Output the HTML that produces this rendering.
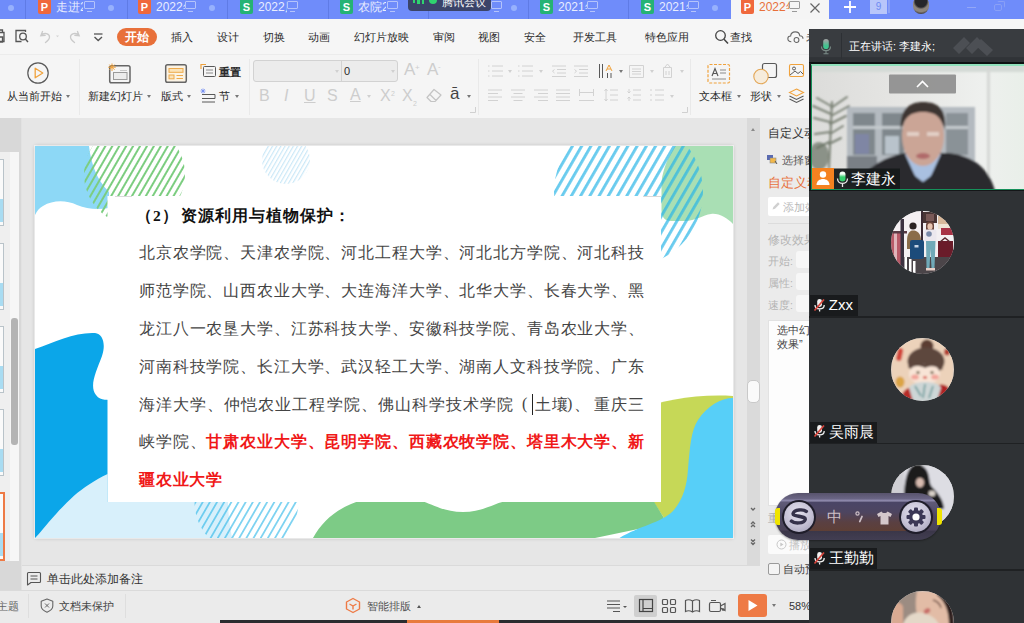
<!DOCTYPE html>
<html lang="zh">
<head>
<meta charset="utf-8">
<title>WPS</title>
<style>
*{box-sizing:border-box;margin:0;padding:0}
html,body{width:1024px;height:623px;overflow:hidden;background:#e6e6e6;font-family:"Liberation Sans",sans-serif;}
.abs{position:absolute}
#root{position:relative;width:1024px;height:623px;overflow:hidden;background:#e6e6e6}
/* tab bar */
#tabbar{left:0;top:0;width:1024px;height:19px;background:#6f8cfa}
.tab{position:absolute;top:0;height:19px;border-left:1px solid #5f7be6}
.tab .ic{position:absolute;top:0;width:13px;height:14px;border-radius:0 0 2px 2px;color:#fff;font-size:11px;font-weight:bold;line-height:14px;text-align:center}
.ic.p{background:#f0683c}
.ic.s{background:#25b374}
.tab .tx{position:absolute;top:-1px;font-size:12px;line-height:16px;color:#e8edff;white-space:nowrap;overflow:hidden}
.tab .dot{position:absolute;top:4.500px;width:6px;height:6px;border-radius:3px;background:#97b1fd}
.tab .mon{position:absolute;top:1px;width:11px;height:8px;border:1px solid #b4c3fb;border-radius:1px}
.tab .mon:after{content:"";position:absolute;left:2px;top:9px;width:5px;height:1px;background:#b4c3fb}
/* menu bar */
#menubar{left:0;top:19px;width:1024px;height:35px;background:#f6f6f6}
.mi{position:absolute;top:10px;font-size:11px;line-height:16px;color:#2b2b2b;white-space:nowrap}
/* ribbon */
#ribbon{left:0;top:54px;width:1024px;height:64px;background:#f5f5f5;border-top:1px solid #ececec}
.rt{position:absolute;font-size:11px;line-height:14px;color:#2b2b2b;white-space:nowrap}
.vsep{position:absolute;top:4px;width:1px;height:56px;background:#e9e9e9}

.dd{position:absolute;width:0;height:0;border-left:2.5px solid transparent;border-right:2.5px solid transparent;border-top:3px solid #777}
.dd.g{border-top-color:#d0d0d0}
.gi{position:absolute;color:#cdcdcd;line-height:18px;white-space:nowrap}

.sl{font-family:"Liberation Serif",serif;font-size:16px;line-height:24px;color:#444;white-space:nowrap}
.jl{left:104px;width:505px;text-align:justify;text-align-last:justify;white-space:nowrap}
.sl b{color:#f01818;font-weight:bold}

.tsep{position:absolute;left:0;width:215px;height:1.500px;background:#1f2123}
.av{position:absolute;left:82px;width:63px;height:63px;border-radius:50%;overflow:hidden;background:#ccc}
.nl{position:absolute;left:1.300px;height:21px;background:#191b1d;color:#fff;font-size:15px;line-height:20px;padding-left:18.500px;white-space:nowrap;overflow:hidden}
.nl .mu{position:absolute;left:3px;top:2.500px}

.th{position:absolute;left:0;width:4px;height:67px;border:1px solid #b9c3c9;border-left:none;background:linear-gradient(#fafafa 0 60%,#a9dcf2 60% 96%,#fafafa 96%)}
.rp{white-space:nowrap;line-height:16px}
.tab .mon.mg:after{background:#9a9a9a}
</style>
</head>
<body>
<div id="root">

<!-- ============ TAB BAR ============ -->
<div id="tabbar" class="abs">
  <div class="tab" style="left:-1px;width:26px"><span class="dot" style="left:8px"></span></div>
  <div class="tab" style="left:25px;width:102px"><span class="ic p" style="left:12px">P</span><span class="tx" style="left:30px;width:27px">走进2</span><span class="mon" style="left:58px"></span><span class="dot" style="left:82px"></span></div>
  <div class="tab" style="left:127px;width:100px"><span class="ic p" style="left:10px">P</span><span class="tx" style="left:28px;width:29px">2022年</span><span class="mon" style="left:57px"></span><span class="dot" style="left:81px"></span></div>
  <div class="tab" style="left:227px;width:101px"><span class="ic s" style="left:12px">S</span><span class="tx" style="left:30px;width:29px">2022届</span><span class="mon" style="left:59px"></span></div>
  <div class="tab" style="left:328px;width:100px"><span class="ic s" style="left:11px">S</span><span class="tx" style="left:29px;width:28px">农院2</span><span class="mon" style="left:58px"></span></div>
  <div class="tab" style="left:428px;width:100px"><span class="mon" style="left:62px"></span><span class="dot" style="left:82px"></span></div>
  <div class="tab" style="left:528px;width:100px"><span class="ic s" style="left:11px">S</span><span class="tx" style="left:29px;width:29px">2021年</span><span class="mon" style="left:58px"></span></div>
  <div class="tab" style="left:628px;width:103px"><span class="ic s" style="left:12px">S</span><span class="tx" style="left:30px;width:29px">2021年</span><span class="mon" style="left:59px"></span><span class="dot" style="left:83px"></span></div>
  <div class="tab" style="left:731px;width:98px;background:#f5f5f5;border-left:none"><span class="ic p" style="left:10px">P</span><span class="tx" style="left:28px;width:30px;color:#e8703a">2022年</span><span class="mon mg" style="left:58px;border-color:#9a9a9a"></span>
    <svg class="abs" style="left:78px;top:2px" width="12" height="12" viewBox="0 0 12 12"><path d="M1.5 1.5L10.5 10.5M10.5 1.5L1.5 10.5" stroke="#666" stroke-width="1.2" fill="none"/></svg></div>
  <!-- plus -->
  <svg class="abs" style="left:843px;top:0" width="14" height="14" viewBox="0 0 14 14"><path d="M7 1V13M1 7H13" stroke="#fff" stroke-width="1.8"/></svg>
  <div class="abs" style="left:870px;top:0;width:17px;height:14px;background:#b8c6fa;color:#6f8af2;font-size:10px;line-height:13px;text-align:center">9</div>
  <div class="abs" style="left:888px;top:0;width:2px;height:13px;background:#8aa0f6"></div>
  <div class="abs" style="left:913px;top:-4px;width:16px;height:18px;border-radius:8px;background:radial-gradient(circle at 50% 30%,#26262a 0 38%,#8d857c 52% 68%,#4a4644 82%)"></div>
  <div class="abs" style="left:967px;top:7px;width:9px;height:1px;background:#93a7f7"></div>
  <div class="abs" style="left:994px;top:4px;width:8px;height:7px;border:1px solid #8aa0f6;border-radius:2px"></div>
  <div class="abs" style="left:997px;top:1px;width:8px;height:7px;border:1px solid #8aa0f6;border-radius:2px;border-left-color:transparent;border-bottom-color:transparent"></div>
  <div class="abs" style="left:408px;top:-6px;width:83px;height:17px;border-radius:4px;background:#394163;opacity:.96"></div>
  <div class="abs" style="left:413px;top:0;width:2px;height:3px;background:#2fd36f"></div><div class="abs" style="left:417px;top:0;width:2.500px;height:4px;background:#2fd36f"></div><div class="abs" style="left:421.500px;top:0;width:2.500px;height:4px;background:#2fd36f"></div>
  <div class="abs" style="left:429px;top:-4px;width:8px;height:8px;border-radius:4px;background:#2fd36f"></div>
  <div class="abs" style="left:442px;top:-5px;font-size:11px;line-height:14px;color:#fff;white-space:nowrap">腾讯会议</div>
</div>

<!-- ============ MENU BAR ============ -->
<div id="menubar" class="abs">
  <svg class="abs" style="left:0;top:10px" width="110" height="16" viewBox="0 0 110 16" fill="none">
    <path d="M-3 3.500H4V12.500H-3M-2 1H2.500V3.500M-2 8H2.500V13H-2" stroke="#555" stroke-width="1.300"/>
    <path d="M21.500 12.500H16V1.500H25.500V3" stroke="#555" stroke-width="1.300"/><circle cx="23" cy="7.500" r="3.300" stroke="#555" stroke-width="1.300"/><path d="M25.300 10L28 13" stroke="#555" stroke-width="1.400"/>
    <path d="M42.500 2.500L40.800 6.800L45.200 6.300M41.200 6.500C44 3 49.500 4.500 49.500 8C49.500 10.500 47.500 12 45.500 13.500" stroke="#cacaca" stroke-width="1.300" stroke-linecap="round"/>
    <path d="M56 6.500H59L57.500 8.300Z" fill="#d4d4d4"/>
    <path d="M77.500 2.500L79.200 6.800L74.800 6.300M78.800 6.500C76 3 70.500 4.500 70.500 8C70.500 10.500 72.500 12 74.500 13.500" stroke="#cacaca" stroke-width="1.300" stroke-linecap="round"/>
    <path d="M94 5H102.500" stroke="#555" stroke-width="1.300"/><path d="M94.500 8L98.200 11.500L102 8" stroke="#555" stroke-width="1.400"/>
  </svg>
  <svg class="abs" style="left:714px;top:10px" width="15" height="16" viewBox="0 0 15 16" fill="none"><circle cx="6.500" cy="6.500" r="4.800" stroke="#444" stroke-width="1.300"/><path d="M10 10.200L14 14.500" stroke="#444" stroke-width="1.500"/></svg>
  <svg class="abs" style="left:787px;top:11px" width="19" height="14" viewBox="0 0 22 16" fill="none"><path d="M5 13.500C2.500 13.500 1 12 1 10C1 8 2.500 6.800 4.200 6.800C4.500 3.800 7 2 9.500 2C12.300 2 14.500 3.800 14.800 6.500C17 6.500 18.500 8 18.500 10" stroke="#666" stroke-width="1.300"/><circle cx="11" cy="11.500" r="2.800" stroke="#666" stroke-width="1.200"/></svg>
  <div class="abs" style="left:116.500px;top:8.500px;width:40px;height:18.500px;border-radius:9.500px;background:#e8703a;color:#fff;font-size:12px;font-weight:bold;line-height:18.500px;text-align:center">开始</div>
  <span class="mi" style="left:171px">插入</span>
  <span class="mi" style="left:217px">设计</span>
  <span class="mi" style="left:263px">切换</span>
  <span class="mi" style="left:308px">动画</span>
  <span class="mi" style="left:354px">幻灯片放映</span>
  <span class="mi" style="left:433px">审阅</span>
  <span class="mi" style="left:478px">视图</span>
  <span class="mi" style="left:524px">安全</span>
  <span class="mi" style="left:573px">开发工具</span>
  <span class="mi" style="left:645px">特色应用</span>
  <span class="mi" style="left:730px">查找</span>
  <span class="mi" style="left:806px;color:#555">未</span>
</div>

<!-- ============ RIBBON ============ -->
<div id="ribbon" class="abs">
  <!-- play from current -->
  <svg class="abs" style="left:26px;top:6px" width="24" height="24" viewBox="0 0 24 24"><circle cx="12" cy="12" r="10.2" fill="none" stroke="#595959" stroke-width="1.2"/><path d="M9.2 7.2L16.8 12L9.2 16.8Z" fill="none" stroke="#f0a23c" stroke-width="1.3" stroke-linejoin="round"/></svg>
  <span class="rt" style="left:7px;top:34px">从当前开始</span><span class="dd" style="left:66px;top:40px"></span>
  <div class="vsep" style="left:79px"></div>
  <!-- new slide -->
  <svg class="abs" style="left:105px;top:7px" width="28" height="24" viewBox="0 0 28 24"><rect x="4.700" y="3.700" width="20.300" height="17" rx="1.800" fill="#f5f5f5" stroke="#666" stroke-width="1.500"/><rect x="8.500" y="10.500" width="13.500" height="7" fill="#ececec" stroke="#9a9a9a" stroke-width="1"/><path d="M15 8.500H22" stroke="#c8c8c8" stroke-width="1"/><path d="M7 1.500V9M3.200 5.200H10.800M4.400 2.600L9.600 7.800M9.600 2.600L4.400 7.800" stroke="#f0a23c" stroke-width="1"/></svg>
  <span class="rt" style="left:88px;top:34px">新建幻灯片</span><span class="dd" style="left:147px;top:40px"></span>
  <!-- layout -->
  <svg class="abs" style="left:164px;top:8px" width="24" height="22" viewBox="0 0 24 22"><rect x="1.700" y="1.700" width="20.600" height="17.600" rx="1.800" fill="#fbf3e4" stroke="#666" stroke-width="1.500"/><rect x="5" y="5.500" width="14" height="3.800" fill="#fbe3b8" stroke="#eeaa4c" stroke-width="1"/><rect x="5" y="12" width="5" height="3.800" fill="#fbe3b8" stroke="#eeaa4c" stroke-width="1"/><path d="M12.500 12.500H19M12.500 15.500H19" stroke="#eeaa4c" stroke-width="1.100"/></svg>
  <span class="rt" style="left:161px;top:34px">版式</span><span class="dd" style="left:187px;top:40px"></span>
  <!-- reset -->
  <svg class="abs" style="left:200px;top:8px" width="17" height="16" viewBox="0 0 17 16"><rect x="3.5" y="3.5" width="12" height="10" rx="1" fill="none" stroke="#595959" stroke-width="1"/><path d="M6 7H13M6 10H13" stroke="#8a8a8a" stroke-width="1"/><path d="M1 6V1.5H6" fill="none" stroke="#f0a23c" stroke-width="1.2"/></svg>
  <span class="rt" style="left:219px;top:10px;font-weight:bold;font-size:11px">重置</span>
  <!-- section -->
  <svg class="abs" style="left:200px;top:33px" width="17" height="16" viewBox="0 0 17 16"><path d="M2 6.5H15V10.5H2M2 14H15" fill="none" stroke="#595959" stroke-width="1"/><path d="M3 0.5V5.5M0.5 3H5.5M1.2 1.2L4.8 4.8M4.8 1.2L1.2 4.8" stroke="#6f8af2" stroke-width="0.8"/></svg>
  <span class="rt" style="left:219px;top:34px">节</span><span class="dd" style="left:235px;top:40px"></span>
  <div class="vsep" style="left:249px"></div>
  <!-- font boxes -->
  <div class="abs" style="left:253px;top:5px;width:145px;height:22px;background:#ececec;border:1px solid #d2d2d2;border-radius:3px"></div>
  <div class="abs" style="left:341px;top:6px;width:1px;height:20px;background:#d2d2d2"></div>
  <span class="rt" style="left:344px;top:9px;font-size:11px">0</span>
  <span class="dd g" style="left:335px;top:15px"></span><span class="dd g" style="left:391px;top:15px"></span>
  <span class="gi" style="left:404px;top:6px;font-size:17px">A</span><span class="gi" style="left:415px;top:4px;font-size:8px">+</span>
  <span class="gi" style="left:427px;top:6px;font-size:17px">A</span><span class="gi" style="left:438px;top:3px;font-size:8px">-</span>
  <span class="gi" style="left:259px;top:32px;font-size:16px">B</span>
  <span class="gi" style="left:284px;top:32px;font-size:16px;font-style:italic">I</span>
  <span class="gi" style="left:304px;top:32px;font-size:16px;text-decoration:underline">U</span>
  <span class="gi" style="left:327px;top:32px;font-size:16px">S</span>
  <span class="gi" style="left:350px;top:31px;font-size:16px;text-decoration:underline">A</span><span class="dd g" style="left:367px;top:40px"></span>
  <span class="gi" style="left:380px;top:32px;font-size:16px">X</span><span class="gi" style="left:391px;top:30px;font-size:7px">2</span>
  <span class="gi" style="left:402px;top:32px;font-size:16px">X</span><span class="gi" style="left:413px;top:40px;font-size:7px">2</span>
  <svg class="abs" style="left:425px;top:33px" width="18" height="16" viewBox="0 0 18 16"><path d="M9 1.5L16 7L10 13.5H6L2 9.5Z M5 6.5L11 12.5" fill="none" stroke="#c4c4c4" stroke-width="1.2" stroke-linejoin="round"/></svg>
  <span class="rt" style="left:450px;top:32px;font-size:17px;color:#444">ā</span><span class="dd" style="left:467px;top:40px"></span>
  <div class="vsep" style="left:478px"></div>
  <!-- paragraph row1 -->
  <svg class="abs" style="left:486px;top:7px" width="200" height="20" viewBox="0 0 200 20" fill="none" stroke="#d2d2d2" stroke-width="1">
    <path d="M2 4H3.5M6 4H17M2 9H3.5M6 9H17M2 14H3.5M6 14H17"/>
    <path d="M32 4H33.5M36 4H47M32 9H33.5M36 9H47M32 14H33.5M36 14H47"/>
    <path d="M66 4H80M71 7.5H80M71 11H80M66 14.5H80M68.5 7.5L66.5 9.2L68.5 11"/>
    <path d="M88 4H102M93 7.5H102M93 11H102M88 14.5H102M88.5 7.5L90.5 9.2L88.5 11"/>
    <path d="M113.5 2V16M116.5 2V16" stroke="#595959"/><path d="M120 9L123 3L126 9M121 7H125" stroke="#f0a23c"/><path d="M121.5 11V16M125 11V16" stroke="#595959"/>
    <path d="M143.500 3.500H157.500V15.500H143.500ZM146 7H155M146 9.500H155M146 12H155"/>
    <path d="M177.500 5.500H185.500V15.500H177.500ZM179 5L181.500 2L184 5M180 9V13M183 9V13"/>
  </svg>
  <span class="dd g" style="left:508px;top:15px"></span><span class="dd g" style="left:539px;top:15px"></span><span class="dd" style="left:619px;top:15px"></span><span class="dd g" style="left:650px;top:15px"></span><span class="dd g" style="left:680px;top:15px"></span>
  <!-- paragraph row2 -->
  <svg class="abs" style="left:486px;top:32px" width="200" height="20" viewBox="0 0 200 20" fill="none" stroke="#d2d2d2" stroke-width="1">
    <path d="M2 3H16M2 6.500H12M2 10H16M2 13.500H12"/>
    <path d="M25 3H39M27.500 6.500H36.500M25 10H39M27.500 13.500H36.500"/>
    <path d="M48 3H62M52 6.500H62M48 10H62M52 13.500H62"/>
    <path d="M70 3H84M70 6.500H84M70 10H84M70 13.500H84"/>
    <path d="M93.500 2V9M107.500 2V9M94 5.500H107M93 13.500H108"/>
    <path d="M124 3H132M124 8H132M124 13H132M120 2V14M118.500 4L120 2L121.500 4M118.500 12L120 14L121.500 12"/>
    <path d="M147 3H155M147 8H155M147 13H155M143 2V6M143 10V14M141.500 4.500L143 6L144.500 4.500M141.500 11.500L143 10L144.500 11.500"/>
    <path d="M164 3H166M169 3H178M164 8H166M169 8H178M164 13H166M169 13H178"/>
  </svg>
  <span class="dd g" style="left:670px;top:40px"></span>
  <svg class="abs" style="left:682px;top:52px" width="6" height="6" viewBox="0 0 6 6"><path d="M5.500 0V5.500H0" fill="none" stroke="#d0d0d0"/></svg>
  <svg class="abs" style="left:470px;top:52px" width="6" height="6" viewBox="0 0 6 6"><path d="M5.500 0V5.500H0" fill="none" stroke="#d0d0d0"/></svg>
  <div class="vsep" style="left:690px"></div>
  <!-- text box -->
  <svg class="abs" style="left:706px;top:7px" width="26" height="24" viewBox="0 0 26 24"><rect x="2" y="2.500" width="21.500" height="18.500" rx="1.500" fill="none" stroke="#f0a23c" stroke-width="1.200" stroke-dasharray="3 1.500"/><path d="M6 14L9 6.500L12 14M7 11.500H11" fill="none" stroke="#595959" stroke-width="1.200"/><path d="M14 8H20M14 11H20M6 17H20" stroke="#8a8a8a" stroke-width="1"/></svg>
  <span class="rt" style="left:699px;top:34px">文本框</span><span class="dd" style="left:737px;top:40px"></span>
  <!-- shapes -->
  <svg class="abs" style="left:752px;top:7px" width="26" height="24" viewBox="0 0 26 24"><rect x="10.500" y="1.500" width="14" height="14" rx="2" fill="#f5f5f5" stroke="#595959" stroke-width="1.200"/><circle cx="9" cy="14.500" r="7.200" fill="#f6ecdc" stroke="#e3a655" stroke-width="1.100"/></svg>
  <span class="rt" style="left:750px;top:34px">形状</span><span class="dd" style="left:777px;top:40px"></span>
  <!-- picture / layers -->
  <svg class="abs" style="left:788px;top:8px" width="17" height="15" viewBox="0 0 17 15"><rect x="1.500" y="1.500" width="14" height="12" rx="1.500" fill="none" stroke="#f0a23c" stroke-width="1.100"/><circle cx="6" cy="5.500" r="1.500" fill="none" stroke="#595959"/><path d="M2 12L7 8L10 10.500L12.500 8.500L15 11" fill="none" stroke="#595959" stroke-width="1"/></svg>
  <svg class="abs" style="left:788px;top:33px" width="17" height="16" viewBox="0 0 17 16"><path d="M8.500 1L15.500 4.500L8.500 8L1.500 4.500Z" fill="none" stroke="#f0a23c" stroke-width="1.100"/><path d="M1.500 8L8.500 11.500L15.500 8M1.500 11L8.500 14.500L15.500 11" fill="none" stroke="#595959" stroke-width="1.100"/></svg>
</div>

<!-- WORKSPACE -->
<div id="work" class="abs" style="left:0;top:118px;width:1024px;height:505px;background:#e6e6e6"></div>

<!-- SLIDE -->
<div id="slide" class="abs" style="left:35px;top:146px;width:698px;height:392px;background:#fff;box-shadow:0 0 0 1px rgba(255,255,255,.5),0 0 4px rgba(0,0,0,.22);overflow:hidden">
<svg class="abs" style="left:0;top:0" width="698" height="392" viewBox="0 0 698 392">
  <defs>
    <pattern id="hg" width="6" height="6" patternUnits="userSpaceOnUse" patternTransform="rotate(30)"><rect x="0" y="0" width="2" height="6" fill="#7ccd80"/></pattern>
    <pattern id="hb" width="8" height="8" patternUnits="userSpaceOnUse" patternTransform="rotate(30)"><rect x="0" y="0" width="2.900" height="8" fill="#29b6e8" fill-opacity="0.700"/></pattern>
    <pattern id="hb2" width="6.200" height="6.200" patternUnits="userSpaceOnUse" patternTransform="rotate(30)"><rect x="0" y="0" width="1.800" height="6.200" fill="#29b6e8" fill-opacity="0.600"/></pattern>
    <pattern id="hl" width="3.6" height="3.6" patternUnits="userSpaceOnUse" patternTransform="rotate(30)"><rect x="0" y="0" width="1.2" height="3.6" fill="#cbe8f7"/></pattern>
  </defs>
  <!-- top-left light blue blob -->
  <path d="M0 0H54C56 18 62 34 74 46V62C62 64 52 63 42 59C31 54 18 54 8 60C4 62 2 65 0 69Z" fill="#8dd8f6"/>
  <!-- top-left green hatch -->
  <circle cx="99.500" cy="28.500" r="50.500" fill="url(#hg)"/>
  <!-- small faint hatch -->
  <circle cx="251" cy="14" r="24" fill="url(#hl)"/>
  <!-- top-right light green -->
  <path d="M640 0H698V78C692 72 684 67 676 68C668 69 660 75 650 75H636C630 75 626.500 71 626.500 65V36C628 22 634 10 640 0Z" fill="#a9dfb4"/>
  <!-- top-right blue hatch -->
  <circle cx="593.500" cy="46" r="74.500" fill="url(#hb)"/>
  <!-- bottom pale blue -->
  
  <!-- bottom-left bright blue -->
  <path d="M0 203C20 196 40 186 60 187C68 188 71 198 67 210C61 226 54 240 61 249C66 256 73 252 80 256V392H0Z" fill="#0ba6e9"/>
  <path d="M72.600 328C60 334 48 342 39 349.700C30 358 22 366 3.800 388L0 392H197C195 380 193 368 193 356H72.600Z" fill="#d8f0fb"/>
  <!-- bottom hatch circle -->
  <circle cx="211.500" cy="356" r="52" fill="url(#hb2)"/>
  <!-- yellow-green -->
  <path d="M600 264C630 254 660 248 698 250V392H642L616 352Z" fill="#c6d857"/>
  <!-- green bottom -->
  <path d="M278 392C292 366 320 350 360 350C390 350 400 366 428 366C452 366 462 354 480 354H618L632 377L560 392Z" fill="#7dcb86"/>
  <!-- cyan right -->
  <path d="M698 252C686 252 672 260 663 274C656 285 655 300 653 323C652 340 648 354 638 365C626 377 604 380 584.500 392H698Z" fill="#57cff8"/>
  <!-- text box -->
  <rect x="72.500" y="50" width="553.500" height="306" fill="#fff"/>
  <path d="M80 50.500H97" stroke="#d9d9d9" stroke-width="1"/>
  <path d="M608 50.500H626" stroke="#d9d9d9" stroke-width="1"/>
</svg>
<div class="abs sl" style="left:101px;top:58px;font-weight:bold;font-size:15.500px;letter-spacing:0.900px;color:#111">（2）<span style="margin-left:3px">资源利用与植物保护：</span></div>
<div class="abs sl jl" style="top:95px">北京农学院、天津农学院、河北工程大学、河北北方学院、河北科技</div>
<div class="abs sl jl" style="top:133px">师范学院、山西农业大学、大连海洋大学、北华大学、长春大学、黑</div>
<div class="abs sl jl" style="top:171px">龙江八一农垦大学、江苏科技大学、安徽科技学院、青岛农业大学、</div>
<div class="abs sl jl" style="top:209px">河南科技学院、长江大学、武汉轻工大学、湖南人文科技学院、广东</div>
<div class="abs sl jl" style="top:247px;width:374px">海洋大学、仲恺农业工程学院、佛山科学技术学院</div>
<div class="abs sl" style="left:487px;top:246px">(</div>
<div class="abs sl jl" style="left:500px;top:247px;width:32.500px">土壤</div>
<div class="abs sl" style="left:532px;top:246px">)</div>
<div class="abs sl" style="left:539px;top:247px">、</div>
<div class="abs sl jl" style="left:559px;top:247px;width:49.500px">重庆三</div>
<div class="abs sl jl" style="top:284px">峡学院、<b>甘肃农业大学、昆明学院、西藏农牧学院、塔里木大学、新</b></div>
<div class="abs sl" style="left:104px;top:322px;letter-spacing:0.800px"><b>疆农业大学</b></div>
<div class="abs" style="left:497px;top:248px;width:1px;height:21px;background:#222"></div>
</div>


<!-- LEFT THUMB PANEL -->
<div class="abs" style="left:0;top:118px;width:22px;height:472px;background:#d8d8d8;border-right:1px solid #e2e2e2"></div>
<div class="abs" style="left:0;top:152px;width:19px;height:409px;background:#efefef"></div>
<div class="abs" style="left:10px;top:152px;width:9px;height:409px;background:#f6f6f6"></div>
<div class="abs" style="left:11px;top:318px;width:7px;height:127px;background:#b4b4b4;border-radius:3px"></div>
<div class="th" style="top:159px"></div><div class="th" style="top:243px"></div><div class="th" style="top:326px"></div><div class="th" style="top:409px"></div>
<div class="th" style="top:492px;height:69px;border-color:#ee7a45;border-width:2px;width:5px"></div>

<!-- SCROLLBAR + RIGHT WPS PANEL -->
<div class="abs" style="left:747px;top:118px;width:13px;height:448px;background:#dadada"></div>
<div class="abs" style="left:747px;top:380px;width:13px;height:23px;background:#fafafa;border:1px solid #c9c9c9;border-radius:5px"></div>
<span class="dd" style="left:750.500px;top:128px;transform:rotate(180deg);border-top-color:#8a8a8a"></span>
<svg class="abs" style="left:748.500px;top:506px" width="8" height="40" viewBox="0 0 8 40" fill="none" stroke="#666" stroke-width="1.300"><path d="M2 2L4 4L6 2"/><path d="M2 18L4 16L6 18M2 21L4 19L6 21"/><path d="M2 33.500L4 35.500L6 33.500M2 36.500L4 38.500L6 36.500"/></svg>
<div class="abs" style="left:760px;top:118px;width:50px;height:472px;background:#ebebeb"></div>
<div class="abs rp" style="left:768px;top:125px;color:#333;font-size:11.500px">自定义动画</div>
<svg class="abs" style="left:766px;top:154px" width="12" height="11" viewBox="0 0 12 11"><rect x="1" y="1" width="6" height="5" fill="#5a6ab0"/><rect x="4" y="4" width="6" height="5" fill="#f2b84a" stroke="#8a8a8a" stroke-width="0.600"/><path d="M9 7L11 10" stroke="#555" stroke-width="1"/></svg>
<div class="abs rp" style="left:782px;top:152px;color:#555;font-size:11px">选择窗格</div>
<div class="abs rp" style="left:768px;top:175px;color:#e8703a;font-size:13px">自定义动画</div>
<div class="abs" style="left:768px;top:197px;width:50px;height:19px;background:#fff;border-radius:2px"></div>
<svg class="abs" style="left:771px;top:201px" width="10" height="10" viewBox="0 0 10 10"><path d="M1.500 8.500L2.300 6L7 1.300L8.700 3L4 7.700Z" fill="#d0d0d0"/></svg>
<div class="abs rp" style="left:783px;top:199px;color:#b8b8b8;font-size:11px">添加效果</div>
<div class="abs" style="left:768px;top:223px;width:42px;height:1px;background:#dcdcdc"></div>
<div class="abs rp" style="left:768px;top:232px;color:#b5b5b5;font-size:12px">修改效果</div>
<div class="abs rp" style="left:768px;top:253px;color:#b5b5b5;font-size:10.500px">开始:</div>
<div class="abs rp" style="left:768px;top:275px;color:#b5b5b5;font-size:10.500px">属性:</div>
<div class="abs rp" style="left:768px;top:297px;color:#b5b5b5;font-size:10.500px">速度:</div>
<div class="abs" style="left:796px;top:251px;width:20px;height:17px;background:#f7f7f7;border-radius:3px"></div>
<div class="abs" style="left:796px;top:273px;width:20px;height:17px;background:#f7f7f7;border-radius:3px"></div>
<div class="abs" style="left:796px;top:295px;width:20px;height:17px;background:#f7f7f7;border-radius:3px"></div>
<div class="abs" style="left:768px;top:320px;width:50px;height:186px;background:#fdfdfd;border:1px solid #e2e2e2"></div>
<div class="abs rp" style="left:777px;top:323px;color:#444;font-size:11px;line-height:14px">选中幻<br>效果”</div>
<div class="abs rp" style="left:768px;top:510px;color:#aaa;font-size:10.500px">重</div>
<div class="abs" style="left:768px;top:535px;width:50px;height:19px;background:#fbfbfb;border-radius:2px"></div>
<svg class="abs" style="left:776px;top:539px" width="11" height="11" viewBox="0 0 11 11"><circle cx="5.500" cy="5.500" r="4.500" fill="none" stroke="#c8c8c8"/><path d="M4.300 3.500L7.500 5.500L4.300 7.500Z" fill="#c8c8c8"/></svg>
<div class="abs rp" style="left:789px;top:537px;color:#c4c4c4;font-size:10.500px">播放</div>
<div class="abs" style="left:768px;top:563px;width:12px;height:12px;border:1px solid #9a9a9a;border-radius:2px;background:#f4f4f4"></div>
<div class="abs rp" style="left:783px;top:561px;color:#444;font-size:11px">自动预览</div>

<!-- NOTES BAR -->
<div class="abs" style="left:22px;top:565px;width:738px;height:25px;background:#ebebeb;border-top:1px solid #dadada"></div>
<svg class="abs" style="left:26px;top:571px" width="16" height="15" viewBox="0 0 16 15"><path d="M2.500 1.500H13.500Q14.500 1.500 14.500 2.500V10.500Q14.500 11.500 13.500 11.500H5L1.500 14V2.500Q1.500 1.500 2.500 1.500Z" fill="none" stroke="#555" stroke-width="1.100" stroke-linejoin="round"/><path d="M4.500 5H11.500M4.500 8H11.500" stroke="#555" stroke-width="1.100"/></svg>
<div class="abs rp" style="left:47px;top:571px;color:#333;font-size:12px">单击此处添加备注</div>

<!-- STATUS BAR -->
<div class="abs" style="left:0;top:590px;width:810px;height:33px;background:#ebebeb;border-top:1px solid #dadada"></div>
<div class="abs rp" style="left:-3px;top:598px;color:#666;font-size:11px">主题</div>
<div class="abs" style="left:28px;top:594px;width:1px;height:24px;background:#dedede"></div>
<svg class="abs" style="left:40px;top:598px" width="14" height="15" viewBox="0 0 14 15"><path d="M7 1L12.800 3.200V8C12.800 11 10 13 7 14.200C4 13 1.200 11 1.200 8V3.200Z" fill="none" stroke="#666" stroke-width="1.100" stroke-linejoin="round"/><path d="M5 5.500L9 9.500M9 5.500L5 9.500" stroke="#666" stroke-width="1"/></svg>
<div class="abs rp" style="left:59px;top:598px;color:#444;font-size:11px">文档未保护</div>
<div class="abs" style="left:125px;top:594px;width:1px;height:24px;background:#dedede"></div>
<svg class="abs" style="left:345px;top:597px" width="16" height="17" viewBox="0 0 16 17"><path d="M8 1.500L14.500 5V12L8 15.500L1.500 12V5Z" fill="none" stroke="#ee7a45" stroke-width="1.400" stroke-linejoin="round"/><path d="M4.500 7L8 9L11.500 7M8 9V12.500" fill="none" stroke="#ee7a45" stroke-width="1.400"/></svg>
<div class="abs rp" style="left:367px;top:598px;color:#555;font-size:11px">智能排版</div>
<span class="dd" style="left:417px;top:605px;transform:rotate(180deg);border-top-color:#555"></span>
<svg class="abs" style="left:606px;top:598px" width="22" height="15" viewBox="0 0 22 15"><path d="M1 3H14M1 6.500H14M1 10H14M7 13.500H14" stroke="#555" stroke-width="1.200"/><path d="M17 8L19 10L21 8Z" fill="#555"/></svg>
<div class="abs" style="left:634px;top:595px;width:23px;height:22px;background:#cfcfcf;border-radius:2px"></div>
<svg class="abs" style="left:638px;top:598px" width="16" height="16" viewBox="0 0 16 16"><rect x="1.500" y="1.500" width="13" height="12" fill="none" stroke="#444" stroke-width="1.200"/><path d="M5 1.500V13.500M5 10.500H14.500" stroke="#444" stroke-width="1.200"/></svg>
<svg class="abs" style="left:661px;top:598px" width="16" height="16" viewBox="0 0 16 16" fill="none" stroke="#555" stroke-width="1.200"><rect x="1.500" y="1.500" width="5" height="5" rx="1"/><rect x="9.500" y="1.500" width="5" height="5" rx="1"/><rect x="1.500" y="9.500" width="5" height="5" rx="1"/><rect x="9.500" y="9.500" width="5" height="5" rx="1"/></svg>
<svg class="abs" style="left:684px;top:598px" width="17" height="16" viewBox="0 0 17 16" fill="none" stroke="#555" stroke-width="1.200"><path d="M8.500 3C6 1.500 3.500 1.500 1.500 2.500V13.500C3.500 12.500 6 12.500 8.500 14C11 12.500 13.500 12.500 15.500 13.500V2.500C13.500 1.500 11 1.500 8.500 3ZM8.500 3V14"/></svg>
<svg class="abs" style="left:708px;top:598px" width="19" height="16" viewBox="0 0 19 16" fill="none" stroke="#555" stroke-width="1.200"><rect x="1.500" y="4.500" width="11" height="9" rx="1.500"/><path d="M12.500 8L17 5.500V12.500L12.500 10M3 2.500H8"/><circle cx="15" cy="11.500" r="1.300" fill="#555" stroke="none"/></svg>
<div class="abs" style="left:738px;top:594px;width:29px;height:23px;background:#ee7a45;border-radius:3px"></div>
<svg class="abs" style="left:746px;top:599px" width="13" height="13" viewBox="0 0 13 13"><path d="M2.500 1L11.500 6.500L2.500 12Z" fill="#fff"/></svg>
<span class="dd" style="left:772px;top:604px"></span>
<div class="abs rp" style="left:789px;top:598px;color:#333;font-size:11px">58%</div>
<div class="abs" style="left:220px;top:620px;width:590px;height:3px;background:#2a2c2f"></div>
<div class="abs" style="left:407px;top:620px;width:92px;height:3px;background:#e87a3c"></div>

<!-- TENCENT PANEL -->
<div id="tm" class="abs" style="left:809px;top:29px;width:215px;height:594px;background:#2f3235;overflow:hidden">
  <!-- header -->
  <div class="abs" style="left:0;top:0;width:215px;height:34px;background:linear-gradient(#393c40 0 82%,#303337 84% 100%)"></div>
  <div class="abs" style="left:0;top:33px;width:215px;height:1.500px;background:#0d1112"></div>
  <svg class="abs" style="left:11px;top:9px" width="12" height="18" viewBox="0 0 12 18"><defs><linearGradient id="mg" x1="0" y1="0" x2="0" y2="1"><stop offset="0.150" stop-color="#9aa3a1"/><stop offset="0.700" stop-color="#40c48e"/></linearGradient></defs><rect x="3.200" y="1" width="5.600" height="10" rx="2.800" fill="url(#mg)"/><path d="M1.500 8.500C1.500 14 10.500 14 10.500 8.500M6 12.800V15.500M3.500 15.800H8.500" fill="none" stroke="#7a8a86" stroke-width="1.100"/></svg>
  <div class="abs" style="left:32px;top:4px;width:1px;height:26px;background:#2d3034"></div>
  <div class="abs" style="left:40px;top:9px;font-size:10.800px;line-height:16px;color:#fff;white-space:nowrap">正在讲话: 李建永;</div>
  <svg class="abs" style="left:144px;top:8px" width="42" height="20" viewBox="0 0 42 20"><path d="M0 11L11 0L17 6L6 17ZM13 11L24 0L30 6L19 17ZM22 8L28 2L40 13L34 19Z" fill="#4c4f54"/></svg>
  <!-- video -->
  <div class="abs" style="left:0;top:34px;width:2px;height:128px;background:#1a1d1f"></div>
  <div class="abs" style="left:0;top:160.500px;width:215px;height:1.200px;background:#141618"></div>
  <div class="abs" style="left:2px;top:34.500px;width:216px;height:126px;border:1.500px solid #16905a;border-top:2px solid #8fe0bb;background:#e2e3e1;overflow:hidden">
    <svg class="abs" style="left:-2.700px;top:-2px" width="216" height="127" viewBox="0 0 216 127">
      <defs><filter id="bl" x="-10%" y="-10%" width="120%" height="120%"><feGaussianBlur stdDeviation="1.300"/></filter>
      <linearGradient id="wall" x1="0" y1="0" x2="1" y2="0"><stop offset="0" stop-color="#dcdcda"/><stop offset="0.450" stop-color="#e6e6e4"/><stop offset="0.800" stop-color="#eef0ee"/><stop offset="1" stop-color="#e9efe9"/></linearGradient></defs>
      <rect width="216" height="127" fill="url(#wall)"/>
      <g filter="url(#bl)">
        <rect x="0" y="0" width="216" height="8" fill="#d4dad6"/>
        <rect x="178" y="0" width="3" height="127" fill="#d6d8d6"/>
        <!-- cabinet -->
        <rect x="38" y="43" width="128" height="60" fill="#b4bac0"/>
        <rect x="44" y="49" width="22" height="42" fill="#7f878c"/>
        <rect x="73" y="49" width="22" height="42" fill="#7f878c"/>
        <rect x="137" y="49" width="22" height="42" fill="#8a9297"/>
        <rect x="44" y="62" width="115" height="3" fill="#c4cace"/>
        <rect x="46" y="70" width="14" height="20" fill="#7f86a4"/>
        <rect x="76" y="72" width="14" height="18" fill="#b9c3cb"/>
        <rect x="38" y="92" width="30" height="30" fill="#7a8086"/>
        <!-- plant -->
        <path d="M23 38L20 104M22 42L8 34M22 44L38 33M22 50L4 42M22 52L40 42M21 58L5 54M21 60L37 52M21 68L6 70M21 70L34 62M20 78L8 84M20 80L32 74" stroke="#7b8276" stroke-width="2" fill="none" stroke-linecap="round"/>
        <ellipse cx="10" cy="92" rx="10" ry="14" fill="#6a7264" opacity="0.700"/>
        <!-- body -->
        <path d="M46 127C52 106 74 93 96 89L140 89C164 92 180 104 186 127Z" fill="#2a2a2e"/>
        <path d="M96 90L106 112L114 118L122 112L132 90Z" fill="#a9c0e0"/>
        <path d="M100 104L114 122L128 104L132 116L114 127L98 116Z" fill="#2a2a2e"/>
        <!-- head -->
        <ellipse cx="114" cy="72" rx="21" ry="30" fill="#cba596"/>
        <path d="M92 66C90 46 100 38 114 38C130 38 138 46 136 66C132 54 128 48 114 48C100 48 96 54 92 66Z" fill="#3e3630"/>
        <path d="M98 70H110M118 70H130" stroke="#e2cfc6" stroke-width="4"/>
        <ellipse cx="114" cy="92" rx="7" ry="3" fill="#b06a6a"/>
      </g>
      <rect x="80" y="10.500" width="67" height="19" rx="1" fill="#8e8e8e" opacity="0.920"/>
      <path d="M108 23L113.500 17.500L119 23" fill="none" stroke="#fff" stroke-width="1.600"/>
      <!-- label -->
      <rect x="3" y="104" width="22" height="21" fill="#f58220"/>
      <circle cx="14" cy="110.500" r="3.200" fill="#fff"/><path d="M7.500 121C7.500 113 20.500 113 20.500 121Z" fill="#fff"/>
      <rect x="25" y="104.500" width="66" height="20.500" fill="#15191a" opacity="0.950"/>
      <defs><linearGradient id="mg2" x1="0" y1="0" x2="0" y2="1"><stop offset="0.250" stop-color="#f4fff6"/><stop offset="0.550" stop-color="#35d06e"/></linearGradient></defs><rect x="30.500" y="107.500" width="6" height="10" rx="3" fill="url(#mg2)"/><path d="M28.500 114.500C28.500 121 38.500 121 38.500 114.500" fill="none" stroke="#e8e8e8" stroke-width="1.300"/><path d="M33.500 120V123" stroke="#e8e8e8" stroke-width="1.300"/>
    </svg>
    <div class="abs" style="left:39px;top:103px;font-size:15px;line-height:20px;color:#fff;white-space:nowrap">李建永</div>
  </div>
  <!-- tiles -->
  <div class="tsep" style="top:287px"></div><div class="tsep" style="top:413.500px"></div><div class="tsep" style="top:540px"></div>
  <div class="av" style="top:182px" id="av1"><svg width="63" height="63" viewBox="0 0 63 63"><defs><filter id="b1"><feGaussianBlur stdDeviation="0.700"/></filter></defs><g filter="url(#b1)">
<rect width="63" height="63" fill="#f4f0f2"/>
<rect x="0" y="46" width="63" height="17" fill="#4c4549"/>
<rect x="0" y="22" width="11" height="32" fill="#b85a68"/><rect x="3" y="22" width="3" height="32" fill="#e0b4ba"/>
<rect x="0" y="20" width="16" height="2.500" fill="#5a3a44"/>
<rect x="9.500" y="8" width="3.500" height="54" fill="#3a3040"/>
<rect x="30" y="0" width="2" height="30" fill="#3a2c30"/>
<rect x="32" y="1" width="14" height="11" fill="#4a3436"/><rect x="35" y="3" width="8" height="7" fill="#7a5a58"/>
<rect x="47" y="5" width="15" height="8" fill="#d8b89a"/><rect x="47" y="13" width="15" height="5" fill="#efe4d4"/><rect x="50" y="17" width="12" height="7" fill="#a83244"/>
<rect x="47" y="30" width="15" height="16" fill="#6a1a2a"/><path d="M49 31L54 27L59 31" stroke="#5a2a30" stroke-width="1.500" fill="none"/>
<circle cx="22" cy="15" r="3.600" fill="#2a2022"/>
<path d="M16 30C16 22 19 19.500 22 19.500C26 19.500 30 22 30 30V38H16Z" fill="#8a6c4a"/>
<rect x="19" y="29" width="14" height="19" rx="2" fill="#1f4b7a"/><rect x="23.500" y="34" width="4" height="2.500" fill="#c8d4e4"/>
<rect x="13.500" y="46" width="2.500" height="15" fill="#fff"/><rect x="18" y="48" width="2.500" height="14" fill="#fff"/><rect x="22" y="50" width="2.500" height="12" fill="#fff"/>
<path d="M35 14C35 9 43 9 43 14V24H35Z" fill="#6a443a"/>
<ellipse cx="39" cy="15.500" rx="2.600" ry="3.200" fill="#e8c4b0"/>
<rect x="33.500" y="18.500" width="12" height="12" rx="2" fill="#ece8ee"/><circle cx="38" cy="23" r="2.800" fill="#7a8aa8"/>
<path d="M35 30H44.500L43.500 57H40.500L39.500 38L38.500 57H35.500Z" fill="#70a9b8"/>
<rect x="35" y="57" width="9" height="2.500" fill="#e8d0c8"/>
</g></svg></div>
  <div class="av" style="top:308.500px" id="av2"><svg width="63" height="63" viewBox="0 0 63 63"><defs><filter id="b2"><feGaussianBlur stdDeviation="0.800"/></filter></defs><g filter="url(#b2)">
<rect width="63" height="63" fill="#ecd2ba"/>
<rect x="6" y="10" width="5.500" height="13" rx="2.500" fill="#d2443a" transform="rotate(12 9 16)"/>
<ellipse cx="56" cy="14" rx="3" ry="3.500" fill="#b04030"/>
<ellipse cx="9" cy="44" rx="4.500" ry="5.500" fill="#dba444"/>
<circle cx="36" cy="8" r="6.500" fill="#5b3c32"/>
<ellipse cx="35" cy="23.500" rx="18.500" ry="14" fill="#5d463e"/>
<ellipse cx="33.500" cy="36" rx="15.500" ry="10.500" fill="#f8e4d6"/>
<path d="M17 30C20 20 30 18 33 26C36 18 48 20 52 32C46 28 40 27 34 30C28 27 22 28 17 30Z" fill="#5d463e"/>
<ellipse cx="24" cy="39" rx="3.800" ry="2.600" fill="#f2a49a"/><ellipse cx="44" cy="39" rx="3.800" ry="2.600" fill="#f2a49a"/>
<circle cx="27" cy="34.500" r="1.600" fill="#6a5a40"/><circle cx="41" cy="34.500" r="1.600" fill="#6a5a40"/>
<ellipse cx="34" cy="39.500" rx="2.200" ry="1.300" fill="#d8544a"/>
<path d="M10 63C10 52 18 48 24 50L30 63Z" fill="#b62a26"/>
<path d="M40 63L46 48C52 44 58 48 60 54L52 63Z" fill="#b02422"/>
<path d="M18 50C20 42 48 42 50 50L46 63H22Z" fill="#cdd6d6"/>
<path d="M24 48L30 58M34 46L32 60M42 48L38 60" stroke="#6a9a9a" stroke-width="1.600"/>
</g></svg></div>
  <div class="av" style="top:435.500px" id="av3"><svg width="63" height="63" viewBox="0 0 63 63"><defs><filter id="b3"><feGaussianBlur stdDeviation="0.900"/></filter></defs><g filter="url(#b3)">
<rect width="63" height="63" fill="#dddde3"/>
<rect x="0" y="0" width="13" height="63" fill="#cfcfd4"/>
<path d="M13 34C13 20 15 8 20 2C26 -3 34 0 37 8C39 14 38 18 41 22C47 28 53 36 53 44L34 44Z" fill="#1a1a1f"/>
<ellipse cx="29" cy="17.500" rx="4" ry="5" fill="#d8bcb0"/>
<path d="M24 14C26 10 32 10 34 15C31 12.500 27 12.500 24 14Z" fill="#1a1a1f"/>
<ellipse cx="41" cy="28.500" rx="3.500" ry="3" fill="#d8d0c8"/>
</g></svg></div>
  <div class="av" style="top:562px" id="av4"><svg width="63" height="63" viewBox="0 0 63 63"><defs><filter id="b4"><feGaussianBlur stdDeviation="1"/></filter></defs><g filter="url(#b4)">
<rect width="63" height="63" fill="#9c8c82"/>
<path d="M26 0H50C58 6 63 16 63 34H30C24 26 24 10 26 0Z" fill="#e2bca6"/>
<path d="M50 0C60 6 63 18 63 34H58C58 20 54 10 46 4Z" fill="#2b1d1d"/>
<path d="M0 34V16C4 10 10 10 12 16V34Z" fill="#d9aa92"/>
<path d="M12 34C14 24 24 20 32 22C40 24 46 28 48 34Z" fill="#e4d8c8"/>
<ellipse cx="36" cy="20" rx="3.500" ry="2.500" fill="#c8706a" transform="rotate(-35 36 20)"/>
<path d="M42 9C46 10 49 13 50 17" stroke="#6a4a40" stroke-width="1.300" fill="none"/>
</g></svg></div>
  <div class="nl" style="top:266px;width:48px"><svg class="mu" width="13" height="15" viewBox="0 0 13 15"><rect x="4.200" y="1" width="4.800" height="8" rx="2.400" fill="#f2f2f2"/><path d="M2 7C2 12.200 11.200 12.200 11.200 7" fill="none" stroke="#f2f2f2" stroke-width="1.300"/><path d="M6.600 11.500V13.500" stroke="#f2f2f2" stroke-width="1.300"/><path d="M11 1.500L1.500 12.500" stroke="#d9463d" stroke-width="1.700"/></svg>Zxx</div>
  <div class="nl" style="top:392.500px;width:67px"><svg class="mu" width="13" height="15" viewBox="0 0 13 15"><rect x="4.200" y="1" width="4.800" height="8" rx="2.400" fill="#f2f2f2"/><path d="M2 7C2 12.200 11.200 12.200 11.200 7" fill="none" stroke="#f2f2f2" stroke-width="1.300"/><path d="M6.600 11.500V13.500" stroke="#f2f2f2" stroke-width="1.300"/><path d="M11 1.500L1.500 12.500" stroke="#d9463d" stroke-width="1.700"/></svg>吴雨晨</div>
  <div class="nl" style="top:519px;width:67px"><svg class="mu" width="13" height="15" viewBox="0 0 13 15"><rect x="4.200" y="1" width="4.800" height="8" rx="2.400" fill="#f2f2f2"/><path d="M2 7C2 12.200 11.200 12.200 11.200 7" fill="none" stroke="#f2f2f2" stroke-width="1.300"/><path d="M6.600 11.500V13.500" stroke="#f2f2f2" stroke-width="1.300"/><path d="M11 1.500L1.500 12.500" stroke="#d9463d" stroke-width="1.700"/></svg>王勤勤</div>
</div>


<!-- SOGOU IME BAR -->
<div class="abs" style="left:775px;top:493px;width:166px;height:46.500px;border-radius:23px;background:linear-gradient(#58536c 0,#6a6584 12%,#8c87aa 16%,#5f5a78 20%,#4c4762 50%,#4a4258 78%,#3b3749 82%,#423e52 100%);box-shadow:0 1px 2px rgba(0,0,0,.35)"></div>
<div class="abs" style="left:775px;top:508px;width:5px;height:17px;border-radius:3px 0 0 3px;background:#f0e400"></div>
<div class="abs" style="left:936.500px;top:508px;width:5px;height:17px;border-radius:0 3px 3px 0;background:#f0e400"></div>
<div class="abs" style="left:783px;top:502px;width:151px;height:28.500px;border-radius:14px;background:linear-gradient(#4a4566 0,#4d4560 35%,#5a4042 70%,#5e3f36 100%)"></div>
<div class="abs" style="left:782px;top:499.500px;width:34px;height:34px;border-radius:17px;background:#1f1d2a"></div>
<div class="abs" style="left:784px;top:501.500px;width:30px;height:30px;border-radius:15px;background:radial-gradient(circle at 45% 35%,#e4e1ee 0,#c4c0d4 55%,#9d99b2 100%)"></div>
<svg class="abs" style="left:789px;top:507px" width="20" height="19" viewBox="0 0 20 19"><path d="M16.500 4.500C13 1.800 4 2.500 3.500 6.200C3 10 17 8.500 16.500 12.800C16 16.500 6.500 17 2.800 14" fill="none" stroke="#35314a" stroke-width="3.400" stroke-linecap="round" transform="skewX(-8) translate(1.500 0)"/></svg>
<div class="abs" style="left:899px;top:499.500px;width:34px;height:34px;border-radius:17px;background:#1f1d2a"></div>
<div class="abs" style="left:901px;top:501.500px;width:30px;height:30px;border-radius:15px;background:radial-gradient(circle at 45% 35%,#e4e1ee 0,#c4c0d4 55%,#9d99b2 100%)"></div>
<svg class="abs" style="left:906px;top:506.500px" width="20" height="20" viewBox="0 0 20 20"><g fill="#3b3756"><circle cx="10" cy="10" r="7"/><g id="tt"><rect x="8" y="0.500" width="4" height="19" rx="1"/></g><use href="#tt" transform="rotate(45 10 10)"/><use href="#tt" transform="rotate(90 10 10)"/><use href="#tt" transform="rotate(135 10 10)"/></g><circle cx="10" cy="10" r="3.600" fill="#fff"/></svg>
<div class="abs" style="left:827px;top:507px;font-size:15px;line-height:20px;color:#cdbfc6;white-space:nowrap">中</div>
<svg class="abs" style="left:854px;top:509px" width="12" height="16" viewBox="0 0 12 16"><circle cx="3.500" cy="4.500" r="1.600" fill="none" stroke="#cdbfc6" stroke-width="1.200"/><path d="M8 7.500L5.800 12.500" stroke="#cdbfc6" stroke-width="1.800" stroke-linecap="round"/></svg>
<svg class="abs" style="left:876px;top:511px" width="17" height="14" viewBox="0 0 17 14"><path d="M5.500 0.500L1 3L2.500 6L4.500 5V13.500H12.500V5L14.500 6L16 3L11.500 0.500C10.500 2.500 6.500 2.500 5.500 0.500Z" fill="#d4c8cc"/></svg>

</div>
</body>
</html>
